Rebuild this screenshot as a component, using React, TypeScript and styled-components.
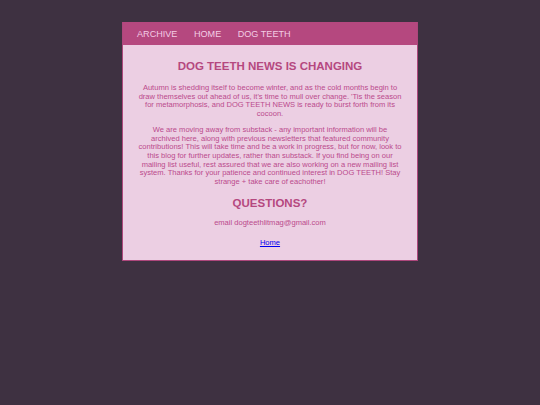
import React from 'react'
import styled, { createGlobalStyle } from 'styled-components'

const GlobalStyle = createGlobalStyle`
  body {
    margin: 0;
    background: #3e3141;
    font-family: "Liberation Sans", Arial, sans-serif;
  }
`

function App() {
  return (
    <>
      <GlobalStyle />
      <Page>
        <Container>
          <Nav>
            <NavLink>ARCHIVE</NavLink>
            <NavLink>HOME</NavLink>
            <NavLink>DOG TEETH</NavLink>
          </Nav>
          <Content>
            <Title>DOG TEETH NEWS IS CHANGING</Title>
            <Paragraph $gap={11}>
              Autumn is shedding itself to become winter, and as the cold months begin to draw themselves out ahead
              of us, it's time to mull over change. 'Tis the season for metamorphosis, and DOG TEETH NEWS is ready to
              burst forth from its cocoon.
            </Paragraph>
            <Paragraph $gap={7.4}>
              We are moving away from substack - any important information will be archived here, along with previous
              newsletters that featured community contributions! This will take time and be a work in progress, but for
              now, look to this blog for further updates, rather than substack. If you find being on our mailing list
              useful, rest assured that we are also working on a new mailing list system. Thanks for your patience and
              continued interest in DOG TEETH! Stay strange + take care of eachother!
            </Paragraph>
            <Title $gap={10}>QUESTIONS?</Title>
            <Paragraph $gap={9}>email dogteethlitmag@gmail.com</Paragraph>
            <Footer>
              <HomeLink href="#">Home</HomeLink>
            </Footer>
          </Content>
        </Container>
      </Page>
    </>
  )
}

export default App

const Page = styled.div`
  padding-top: 22px;
  display: flex;
  justify-content: center;
`

const Container = styled.div`
  width: 294px;
  border: 1px solid #ad477c;
  border-top: none;
  background: #eccfe3;
`

const Nav = styled.nav`
  display: flex;
  align-items: center;
  gap: 16.5px;
  height: 23px;
  padding-left: 14px;
  background: #b5487f;
`

const NavLink = styled.span`
  font-size: 9.1px;
  color: #f3cde5;
`

const Content = styled.div`
  padding: 15px 15px 12px;
  text-align: center;
  color: #bb4a8c;
`

const Title = styled.h1<{ $gap?: number }>`
  margin: ${(p) => p.$gap ?? 0}px 0 0;
  font-size: 11.5px;
  line-height: 13px;
  font-weight: 700;
  color: #b5487f;
`

const Paragraph = styled.p<{ $gap: number }>`
  margin: ${(p) => p.$gap}px 0 0;
  font-size: 7.55px;
  line-height: 8.67px;
`

const Footer = styled.div`
  margin-top: 11.4px;
  font-size: 7.55px;
  line-height: 8.67px;
`

const HomeLink = styled.a`
  color: #0000ee;
`
